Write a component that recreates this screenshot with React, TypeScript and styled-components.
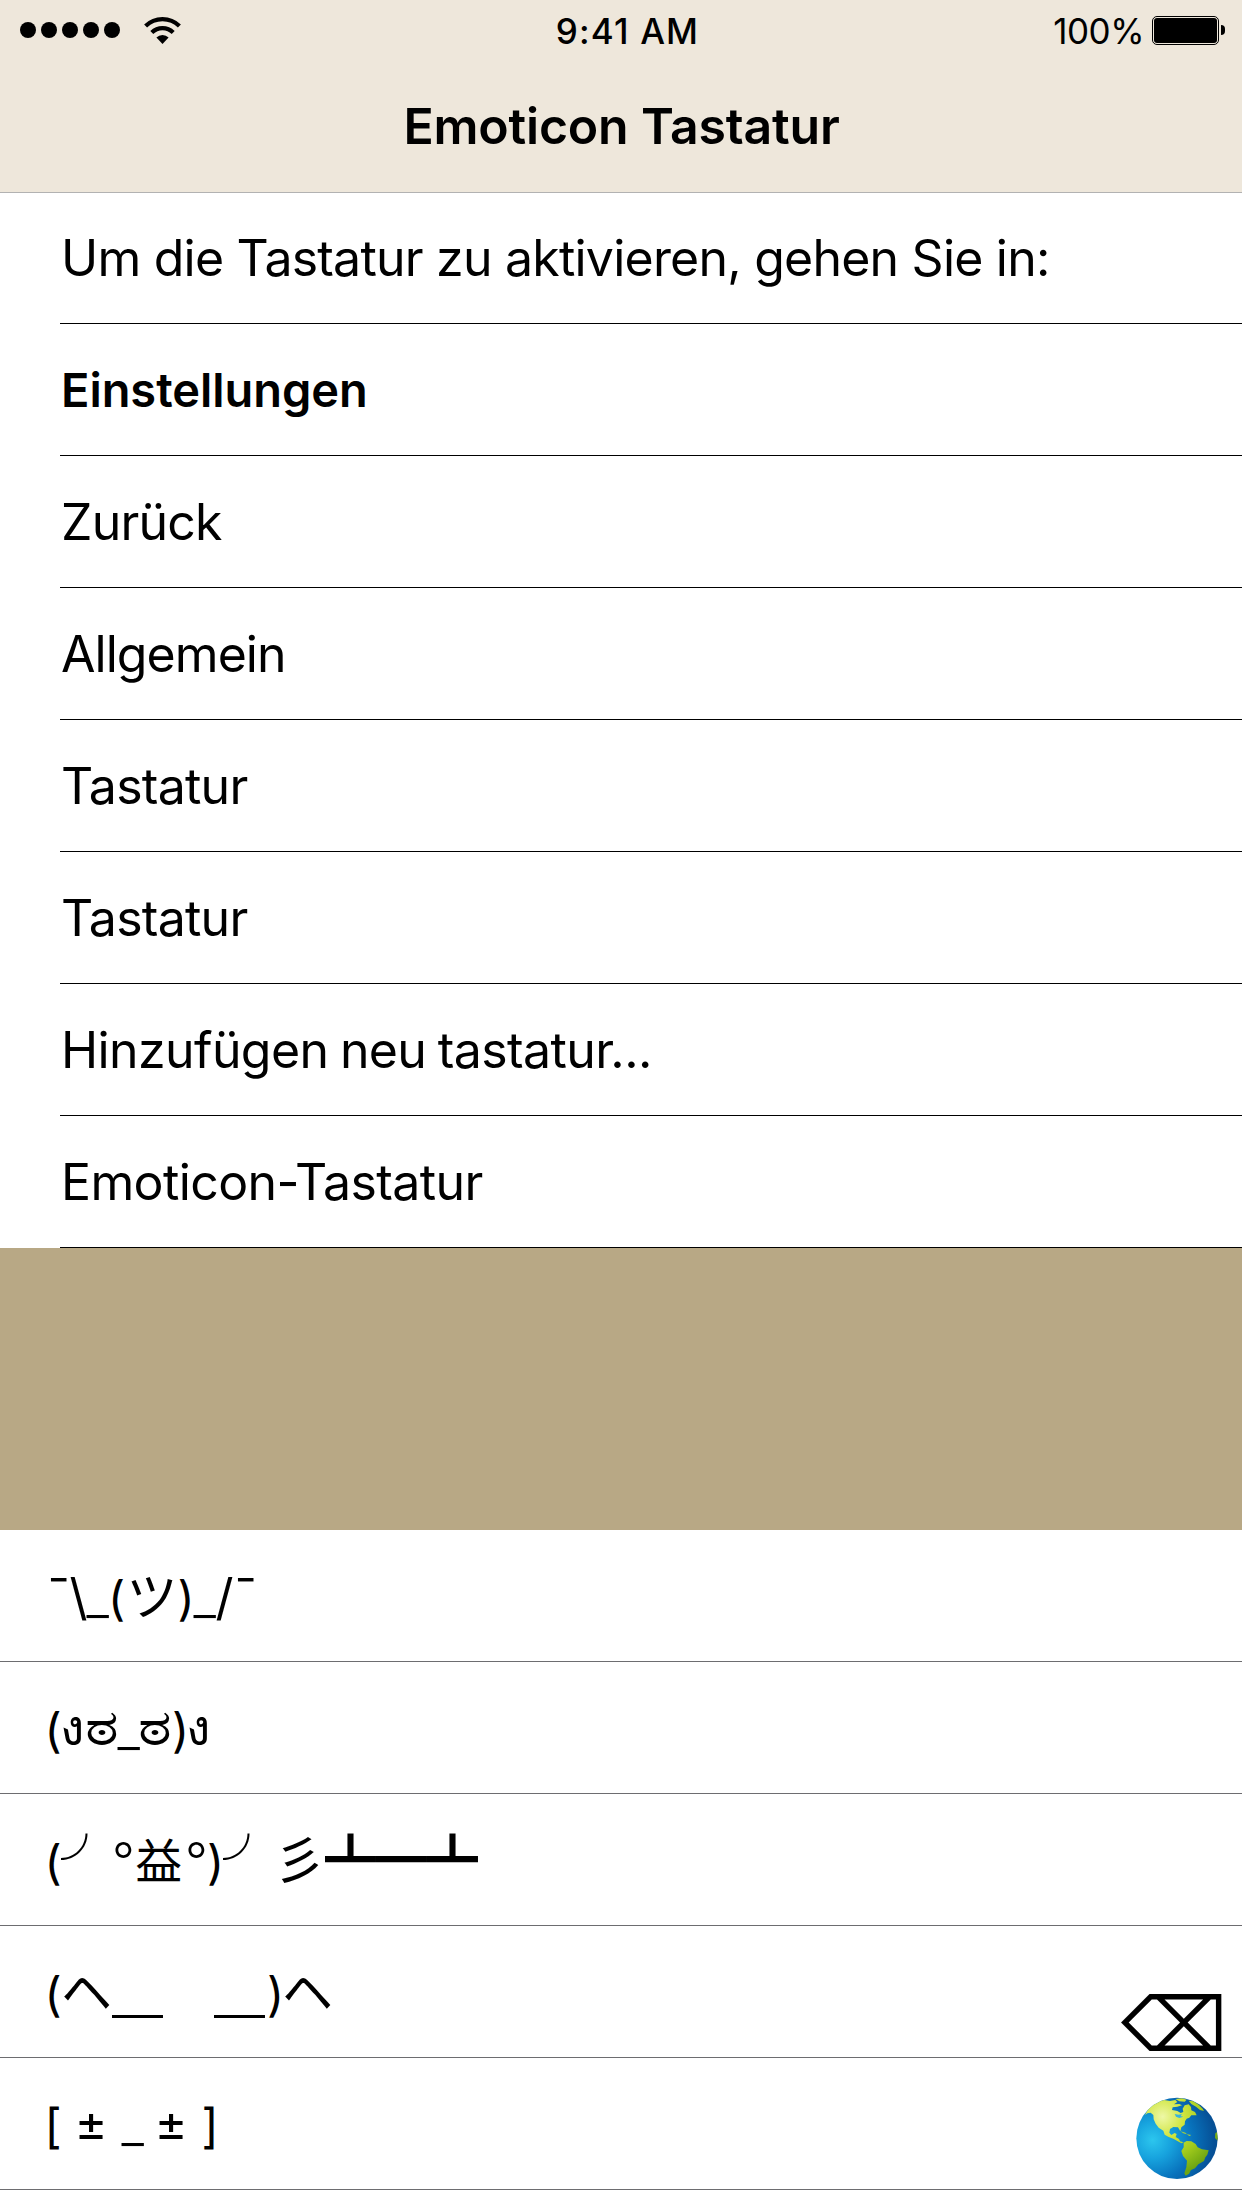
import React from "react";
import styled, { createGlobalStyle } from "styled-components";

const GlobalStyle = createGlobalStyle`
  *, *::before, *::after { box-sizing: border-box; }
  html, body { margin: 0; padding: 0; background: #fff; }
  body {
    color: #000;
    font-family: Inter, "Noto Sans CJK JP", sans-serif;
    -webkit-font-smoothing: antialiased;
  }
`;

const Screen = styled.div`
  position: relative;
  display: flex;
  flex-direction: column;
  width: 1242px;
  height: 2208px;
  overflow: hidden;
  background: #fff;
`;

const Header = styled.header`
  flex: none;
  height: 193px;
  background: #eee7db;
  border-bottom: 1px solid #b2b2b2;
`;

const StatusBar = styled.div`
  display: grid;
  grid-template-columns: 1fr auto 1fr;
  align-items: center;
  height: 60px;
  padding: 0 17px 0 20px;
`;

const StatusLeft = styled.div`
  display: flex;
  align-items: center;
`;

const Signal = styled.div`
  display: flex;
  gap: 5px;
  margin-right: 24px;
`;

const Dot = styled.span`
  width: 16px;
  height: 16px;
  border-radius: 50%;
  background: #000;
`;

const Clock = styled.div`
  padding: 1px 0 0 10px;
  font-size: 35px;
  font-weight: 550;
  letter-spacing: 1.15px;
  line-height: 42px;
`;

const StatusRight = styled.div`
  display: flex;
  align-items: center;
  justify-content: flex-end;
`;

const Percent = styled.span`
  padding-top: 1px;
  margin-right: 8px;
  font-size: 35px;
  letter-spacing: -0.5px;
  line-height: 42px;
`;

const Battery = styled.div`
  width: 67px;
  height: 29px;
  padding: 1px;
  border: 1px solid #000;
  border-radius: 5px;
`;

const BatteryLevel = styled.div`
  height: 100%;
  border-radius: 3px;
  background: #000;
`;

const BatteryCap = styled.span`
  width: 4px;
  height: 10px;
  margin-left: 2px;
  border-radius: 0 4px 4px 0;
  background: #000;
`;

const Title = styled.h1`
  margin: 0;
  padding-left: 1px;
  font-size: 50px;
  font-weight: 590;
  letter-spacing: -0.2px;
  line-height: 132px;
  text-align: center;
`;

const Steps = styled.ul`
  flex: none;
  display: grid;
  grid-template-rows: 131px repeat(7, 132px);
  margin: 0;
  padding: 0 0 0 60px;
  list-style: none;
`;

const Step = styled.li<{ $strong?: boolean; $tracking: number; $wordGap?: number }>`
  display: flex;
  align-items: center;
  padding-left: 1px;
  border-bottom: 1px solid #000;
  font-size: ${(p) => (p.$strong ? 47 : 50)}px;
  font-weight: ${(p) => (p.$strong ? 600 : 400)};
  letter-spacing: ${(p) => p.$tracking}px;
  word-spacing: ${(p) => p.$wordGap ?? 0}px;
  white-space: nowrap;
`;

const Spacer = styled.div`
  flex: none;
  height: 282px;
  background: #b8a885;
`;

const Keyboard = styled.ul`
  flex: none;
  margin: 0;
  padding: 0;
  list-style: none;
`;

const KeyRow = styled.li`
  height: 132px;
  padding-left: 44.5px;
  border-bottom: 1px solid #6d6d70;
  font-size: 50px;
  line-height: 135px;
  white-space: nowrap;
`;

interface GlyphStyle {
  $w: number;
  $size?: number;
  $cjk?: boolean;
  $stretch?: number;
  $rise?: number;
  $weight?: number;
  $thick?: boolean;
}

const Glyph = styled.span<GlyphStyle>`
  display: inline-block;
  width: ${(p) => p.$w}px;
  font-family: ${(p) => (p.$cjk ? '"Noto Sans CJK JP", sans-serif' : 'Inter, sans-serif')};
  font-size: ${(p) => p.$size ?? (p.$cjk ? 51 : 50)}px;
  font-weight: ${(p) => p.$weight ?? 400};
  line-height: 1;
  vertical-align: ${(p) => p.$rise ?? 0}px;
  white-space: pre;
  text-shadow: ${(p) => (p.$thick ? "0 1px 0 #000" : "none")};
  transform: ${(p) => (p.$stretch ? `scaleX(${p.$stretch})` : "none")};
  transform-origin: 0 50%;
`;

const DeleteKey = styled.button`
  position: absolute;
  top: 1988px;
  right: 15px;
  margin: 0;
  padding: 0;
  border: 0;
  background: none;
  color: #000;
  font: 75px/75px "DejaVu Sans", sans-serif;
`;

const GlobeKey = styled.button`
  position: absolute;
  top: 2097px;
  right: 23px;
  width: 84px;
  height: 84px;
  margin: 0;
  padding: 0;
  border: 0;
  background: none;
`;

const Icon = styled.svg`
  display: block;
`;

interface StepData {
  text: string;
  tracking: number;
  wordGap?: number;
  strong?: boolean;
}

const steps: StepData[] = [
  { text: "Um die Tastatur zu aktivieren, gehen Sie in:", tracking: -0.78 },
  { text: "Einstellungen", tracking: -0.05, strong: true },
  { text: "Zurück", tracking: -0.8 },
  { text: "Allgemein", tracking: -0.95 },
  { text: "Tastatur", tracking: -0.75 },
  { text: "Tastatur", tracking: -0.75 },
  { text: "Hinzufügen neu tastatur...", tracking: -0.6, wordGap: -2 },
  { text: "Emoticon-Tastatur", tracking: -0.62 },
];

interface GlyphData {
  c: string;
  w: number;
  size?: number;
  cjk?: boolean;
  stretch?: number;
  rise?: number;
  weight?: number;
  thick?: boolean;
}

const emoticons: GlyphData[][] = [
  [
    { c: "¯", w: 25, stretch: 1.15 },
    { c: "\\", w: 17 },
    { c: "_", w: 21.5, weight: 300 },
    { c: "(", w: 18.5, size: 47 },
    { c: "ツ", w: 51, cjk: true },
    { c: ")", w: 16, size: 47 },
    { c: "_", w: 22, weight: 300 },
    { c: "/", w: 16 },
    { c: "¯", w: 24, stretch: 1.15 },
  ],
  [
    { c: "(", w: 15, size: 47 },
    { c: "ง", w: 25.5, rise: 2 },
    { c: "ಠ", w: 32.5, stretch: 1.28, rise: 2 },
    { c: "_", w: 20.5, weight: 300 },
    { c: "ಠ", w: 34, stretch: 1.28, rise: 2 },
    { c: ")", w: 13.5, size: 47 },
    { c: "ง", w: 25, rise: 2 },
  ],
  [
    { c: "(", w: 16.5, size: 47 },
    { c: "╯", w: 51, cjk: true, weight: 100 },
    { c: "°", w: 23.5, weight: 350 },
    { c: "益", w: 49.5, size: 46.5, cjk: true, rise: 1 },
    { c: "°", w: 22, weight: 350 },
    { c: ")", w: 16, size: 47 },
    { c: "╯", w: 51, cjk: true, weight: 100 },
    { c: "彡", w: 51, cjk: true },
    { c: "┻", w: 51, cjk: true },
    { c: "━", w: 51, cjk: true },
    { c: "┻", w: 51, cjk: true },
  ],
  [
    { c: "(", w: 16.5, size: 47 },
    { c: "ヘ", w: 51, cjk: true },
    { c: "\uFF3F", w: 51, cjk: true, thick: true },
    { c: "\u3000", w: 51, cjk: true },
    { c: "\uFF3F", w: 53, cjk: true, thick: true },
    { c: ")", w: 15, size: 47 },
    { c: "ヘ", w: 51, cjk: true },
  ],
  [
    { c: "[", w: 30, size: 47 },
    { c: "±", w: 47, rise: 2 },
    { c: "_", w: 33, weight: 300 },
    { c: "±", w: 47, rise: 2 },
    { c: "]", w: 20, size: 47 },
  ],
];

const WifiIcon = () => (
  <Icon width="37" height="27" viewBox="0 0 37 27">
    <g fill="none" stroke="#000" strokeWidth="4.2">
      <path d="M1.6 9.1A24 24 0 0 1 35.4 9.1" />
      <path d="M7.8 15.6A15.2 15.2 0 0 1 29.2 15.6" />
    </g>
    <path d="M12.4 20.6A8.6 8.6 0 0 1 24.6 20.6L18.5 27Z" />
  </Icon>
);

const GlobeIcon = () => (
  <Icon width="84" height="84" viewBox="135 411 252 252">
    <defs>
      <radialGradient id="sea" gradientUnits="userSpaceOnUse" cx="188" cy="540" r="185">
        <stop offset="0" stopColor="#2cc6ee" />
        <stop offset="0.3" stopColor="#17a3de" />
        <stop offset="0.65" stopColor="#0873bd" />
        <stop offset="1" stopColor="#065096" />
      </radialGradient>
      <radialGradient id="land" gradientUnits="userSpaceOnUse" cx="218" cy="470" r="180">
        <stop offset="0" stopColor="#eef8a6" />
        <stop offset="0.35" stopColor="#cfe53f" />
        <stop offset="0.7" stopColor="#9fca1c" />
        <stop offset="1" stopColor="#6ea512" />
      </radialGradient>
      <clipPath id="disc">
        <circle cx="261" cy="535" r="122" />
      </clipPath>
    </defs>
    <circle cx="261" cy="535" r="122" fill="url(#sea)" />
    <g clipPath="url(#disc)" fill="url(#land)">
      <path d="M165 465L178 440L200 424L222 420L240 423L256 420L262 426L252 433L268 432L276 436L262 440L248 442L246 450L262 453L272 459L280 456L278 446L284 436L296 433L303 441L304 451L315 456L320 466L304 466L298 473L290 476L285 484L284 494L274 502L271 514L264 502L250 501L240 507L238 518L244 525L254 519L260 522L257 531L267 537L270 544L281 547L274 550L262 543L250 536L236 531L224 524L220 512L206 503L197 491L191 478L190 465L182 458L172 460Z" />
      <path d="M281 548L290 543L304 544L317 552L323 562L336 568L356 571L352 584L346 592L342 603L325 613L315 625L303 630L297 641L287 647L283 640L289 622L291 602L279 588L274 573L281 562Z" />
      <path d="M296 422L310 424L326 434L338 446L342 453L330 450L318 440L304 432Z" />
      <path d="M256 417L276 415L290 419L284 425L268 424Z" />
      <path d="M384 514L376 520L375 534L384 543Z" />
    </g>
    <g clipPath="url(#disc)">
      <path d="M254 462L266 464L276 462L272 468L280 470L268 474L258 470Z" fill="#39b4dc" />
      <path d="M272 514L286 518L291 523L280 520ZM290 523L304 525L298 528Z" fill="#b5d72c" />
    </g>
  </Icon>
);

export default function App() {
  return (
    <Screen>
      <GlobalStyle />
      <Header>
        <StatusBar>
          <StatusLeft>
            <Signal>
              {[0, 1, 2, 3, 4].map((n) => (
                <Dot key={n} />
              ))}
            </Signal>
            <WifiIcon />
          </StatusLeft>
          <Clock>9:41 AM</Clock>
          <StatusRight>
            <Percent>100%</Percent>
            <Battery>
              <BatteryLevel />
            </Battery>
            <BatteryCap />
          </StatusRight>
        </StatusBar>
        <Title>Emoticon Tastatur</Title>
      </Header>
      <Steps>
        {steps.map((s, i) => (
          <Step key={i} $strong={s.strong} $tracking={s.tracking} $wordGap={s.wordGap}>
            {s.text}
          </Step>
        ))}
      </Steps>
      <Spacer />
      <Keyboard>
        {emoticons.map((row, i) => (
          <KeyRow key={i}>
            {row.map((g, j) => (
              <Glyph
                key={j}
                $w={g.w}
                $size={g.size}
                $cjk={g.cjk}
                $stretch={g.stretch}
                $rise={g.rise}
                $weight={g.weight}
                $thick={g.thick}
              >
                {g.c}
              </Glyph>
            ))}
          </KeyRow>
        ))}
      </Keyboard>
      <DeleteKey aria-label="Löschen">⌫</DeleteKey>
      <GlobeKey aria-label="Tastatur wechseln">
        <GlobeIcon />
      </GlobeKey>
    </Screen>
  );
}
